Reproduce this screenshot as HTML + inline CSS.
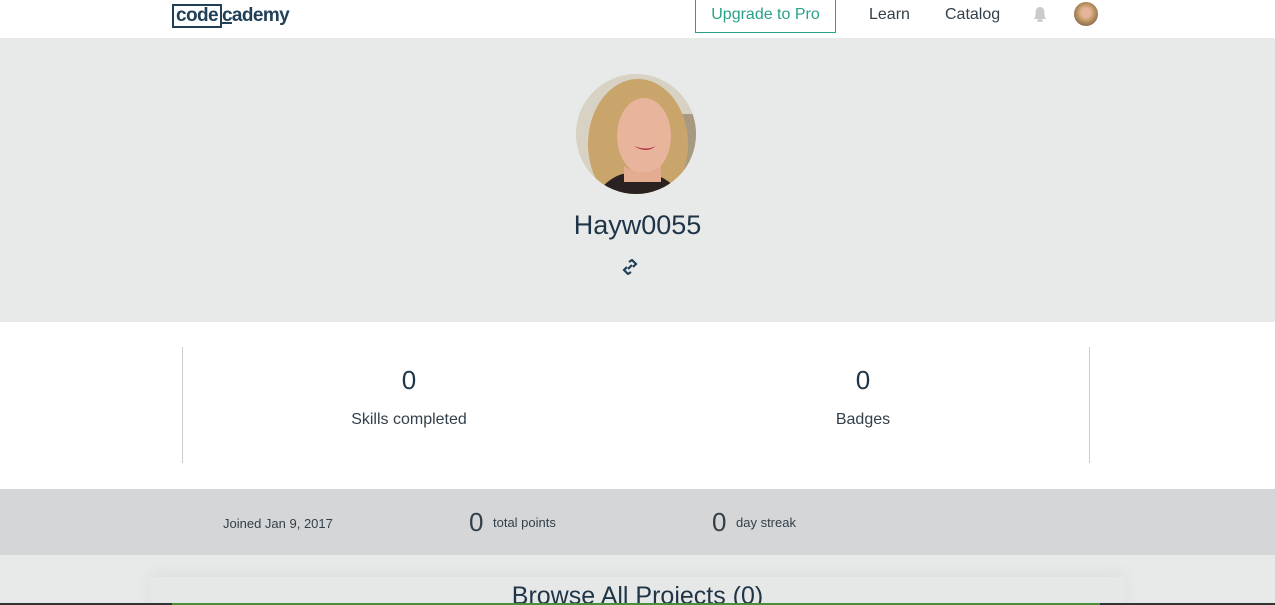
<!DOCTYPE html>
<html><head><meta charset="utf-8"><style>
*{margin:0;padding:0;box-sizing:border-box}
html,body{width:1275px;height:605px;overflow:hidden}
body{font-family:"Liberation Sans",sans-serif;color:#1f3447;background:#fff;position:relative}
.nav{height:38px;background:#fff;position:relative}
.logo{position:absolute;left:172px;top:4px;font-size:19px;font-weight:bold;color:#1f4056;letter-spacing:-0.6px}
.logo .box{border:2px solid #1f4056;padding:0 2px;display:inline-block;line-height:20px}
.up{position:absolute;left:695px;top:-1px;width:141px;height:34px;border:1px solid #2aa18a;color:#2aa18a;font-size:16px;text-align:center;line-height:30px}
.nl{position:absolute;top:6px;font-size:16px;color:#33404a}
.hero{position:absolute;top:38px;left:0;width:1275px;height:284px;background:#e8eaea}
.av{position:absolute;left:576px;top:36px;width:120px;height:120px;border-radius:50%;overflow:hidden;background:#d9d4c8}
.name{position:absolute;left:0;width:1275px;top:172px;text-align:center;font-size:27px;color:#1f3447}
.stats{position:absolute;top:322px;height:167px;width:1275px;background:#fff}
.vl{position:absolute;top:25px;width:1px;height:116px;background:#ccc}
.num{position:absolute;font-size:26px;text-align:center;width:300px}
.lab{position:absolute;font-size:16px;text-align:center;width:300px;color:#33404a}
.bar{position:absolute;top:489px;height:66px;width:1275px;background:#d5d6d7;font-size:13px;color:#33404a}
.bottom{position:absolute;top:555px;height:50px;width:1275px;background:#e8eaea;overflow:hidden}
.card{position:absolute;left:150px;top:22px;width:975px;height:40px;background:#e6e8e8;box-shadow:0 -4px 18px rgba(0,0,0,.05)}
</style></head><body>
<div class="nav">
<div class="logo"><span class="box">code</span><span style="text-decoration:underline;text-decoration-thickness:2px;text-underline-offset:1px">c</span>ademy</div>
<div class="up">Upgrade to Pro</div>
<div class="nl" style="left:869px">Learn</div>
<div class="nl" style="left:945px">Catalog</div>
<svg style="position:absolute;left:1032px;top:6px" width="16" height="17" viewBox="0 0 16 17"><path d="M8 1C5 1 3.5 3.5 3.5 6.5V10L2 13H14L12.5 10V6.5C12.5 3.5 11 1 8 1Z" fill="#ccc"/><ellipse cx="8" cy="14.5" rx="3" ry="1.5" fill="#ccc"/></svg>
<div style="position:absolute;left:1074px;top:2px;width:24px;height:24px;border-radius:50%;background:radial-gradient(circle at 50% 45%,#e5b49a 0 25%,#c29a66 45%,#8a6a50 75%)"></div>
</div>
<div class="hero">
<div class="av">
<svg width="120" height="120" viewBox="0 0 120 120">
<rect width="120" height="120" fill="#d8d2c4"/>
<rect x="90" y="40" width="30" height="60" fill="#a89a80"/>
<ellipse cx="62" cy="70" rx="50" ry="65" fill="#c9a56c"/>
<ellipse cx="68" cy="62" rx="27" ry="38" fill="#e8b59c"/>
<path d="M20 120 Q40 95 60 100 Q85 95 105 120Z" fill="#2a2220"/>
<path d="M48 92 Q68 105 85 92 L85 108 L48 108Z" fill="#e4ad92"/>
<path d="M58 72 Q70 80 80 72 Q70 77 58 72Z" fill="#b03040"/>
</svg>
</div>
<div class="name">Hayw0055</div>
<svg style="position:absolute;left:622px;top:221px" width="16" height="16" viewBox="0 0 16 16"><g fill="none" stroke="#1f4056" stroke-width="2.2"><path d="M7 3L10 1L14 5L11 8"/><path d="M9 13L6 15L2 11L5 8"/><path d="M6 10L10 6"/></g></svg>
</div>
<div class="stats">
<div class="vl" style="left:182px"></div><div class="vl" style="left:1089px"></div>
<div class="num" style="left:259px;top:43px">0</div>
<div class="lab" style="left:259px;top:89px">Skills completed</div>
<div class="num" style="left:713px;top:43px">0</div>
<div class="lab" style="left:713px;top:89px">Badges</div>
</div>
<div class="bar">
<span style="position:absolute;left:223px;top:27px">Joined Jan 9, 2017</span>
<span style="position:absolute;left:469px;top:18px;font-size:26px">0</span>
<span style="position:absolute;left:493px;top:26px">total points</span>
<span style="position:absolute;left:712px;top:18px;font-size:26px">0</span>
<span style="position:absolute;left:736px;top:26px">day streak</span>
</div>
<div class="bottom">
<div class="card"></div>
<div style="position:absolute;left:0;width:1275px;top:27px;text-align:center;font-size:25px;color:#1f3447">Browse All Projects (0)</div>
<div style="position:absolute;left:0;top:48px;width:1275px;height:2px;background:#333"></div>
<div style="position:absolute;left:172px;top:48px;width:928px;height:2px;background:#4a8f3c"></div>
</div>
</body></html>
